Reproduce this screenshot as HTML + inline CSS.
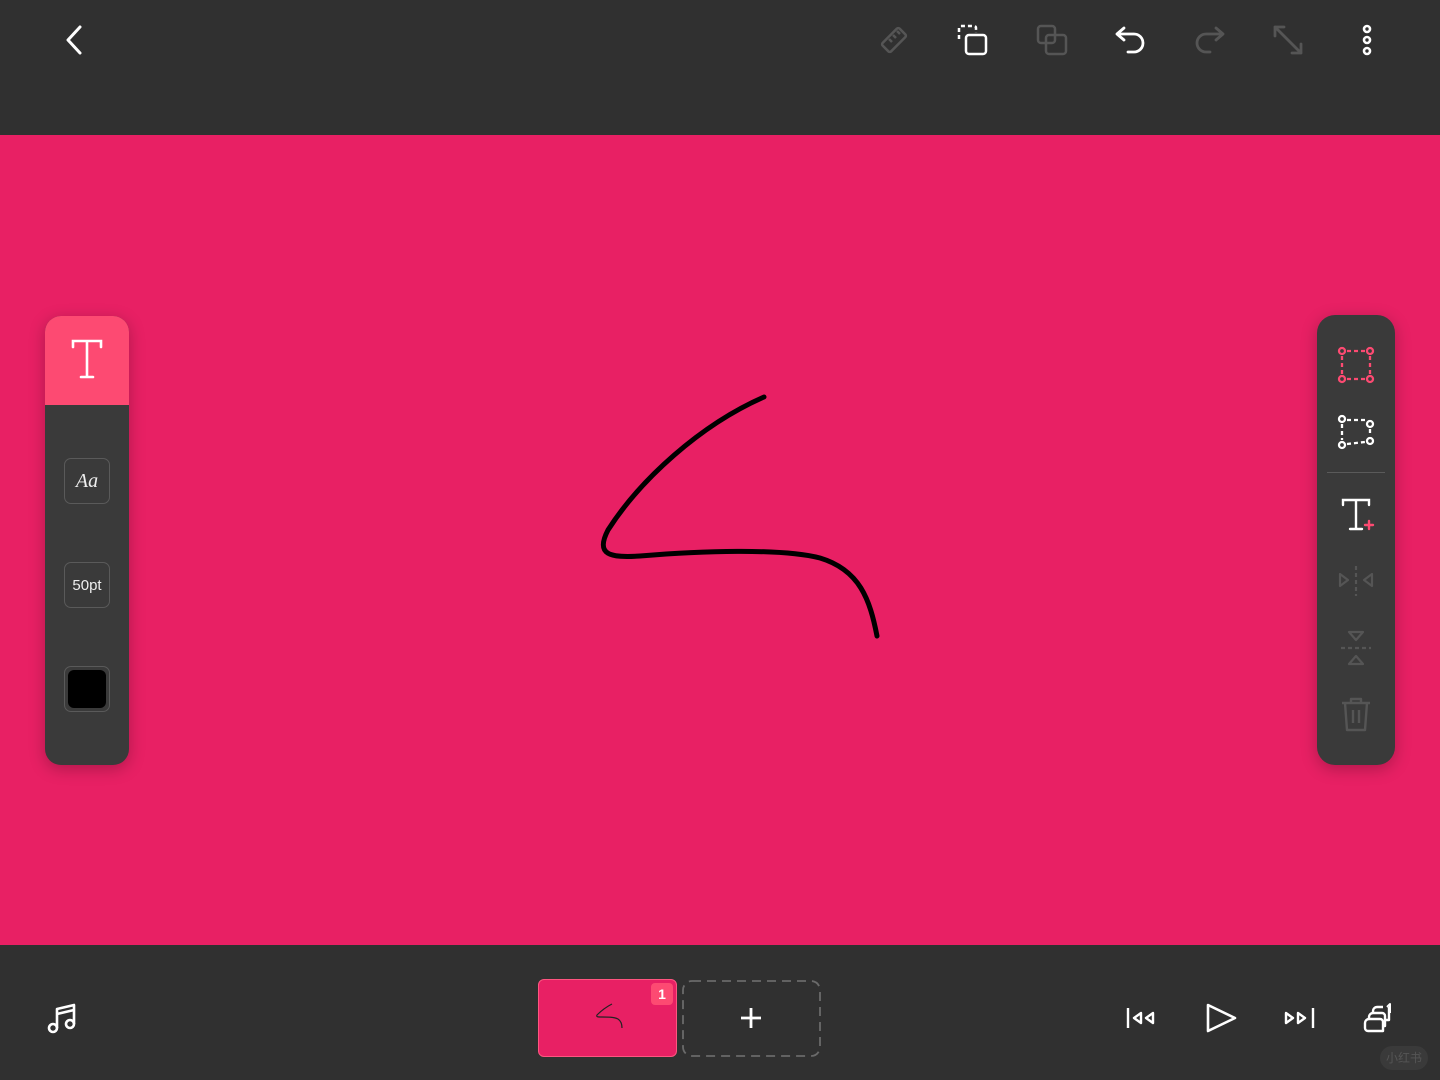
<!DOCTYPE html>
<html><head><meta charset="utf-8"><style>
*{margin:0;padding:0;box-sizing:border-box}
body{width:1440px;height:1080px;background:#303030;position:relative;overflow:hidden;font-family:"Liberation Sans",sans-serif}
.top{position:absolute;left:0;top:0;width:1440px;height:135px;background:#303030}
.canvas{position:absolute;left:0;top:135px;width:1440px;height:810px;background:#e82064}
.bottom{position:absolute;left:0;top:945px;width:1440px;height:135px;background:#303030}
svg{position:absolute;overflow:visible}
.lp{position:absolute;left:45px;top:316px;width:84px;height:449px;background:#3a3a3a;border-radius:16px;overflow:hidden;box-shadow:0 4px 16px rgba(0,0,0,.25)}
.lp .hd{height:89px;background:#fd4a72}
.btn{position:absolute;left:19px;width:46px;height:46px;border:1px solid #5a5a5a;border-radius:7px;color:#eee;display:flex;align-items:center;justify-content:center}
.rp{position:absolute;left:1317px;top:315px;width:78px;height:450px;background:#3a3a3a;border-radius:18px;box-shadow:0 4px 16px rgba(0,0,0,.25)}
</style></head><body>
<div class="top"></div>
<div class="canvas"></div>
<div class="bottom"></div>

<svg style="left:60px;top:24px" width="30" height="32"><path d="M20 3 L8 16 L20 29" fill="none" stroke="#fff" stroke-width="3" stroke-linecap="round" stroke-linejoin="round"/></svg>
<svg style="left:878px;top:24px" width="32" height="32" fill="none" stroke="#555" stroke-width="2.5" stroke-linejoin="round"><rect x="4" y="10" width="24" height="12" rx="2" transform="rotate(-45 16 16)"/><path d="M11 13 l3 3 M15 9 l3 3 M19 5 l3 3" transform="translate(0 2)"/></svg>
<svg style="left:956px;top:23px" width="34" height="34" fill="none" stroke="#fff" stroke-width="2.5"><path d="M3 16 V5 a2 2 0 0 1 2-2 H18 a2 2 0 0 1 2 2 V10" stroke-dasharray="4 3"/><rect x="10" y="12" width="20" height="19" rx="3"/></svg>
<svg style="left:1035px;top:23px" width="34" height="34" fill="none" stroke="#555" stroke-width="2.5"><rect x="3" y="3" width="17" height="17" rx="3"/><rect x="11" y="12" width="20" height="19" rx="3"/></svg>
<svg style="left:1114px;top:24px" width="34" height="32" fill="none" stroke="#fff" stroke-width="2.8" stroke-linecap="round" stroke-linejoin="round"><path d="M10 4 L3 10 L10 16 M3 10 H20 a9 9 0 0 1 0 18 H14"/></svg>
<svg style="left:1192px;top:24px" width="34" height="32" fill="none" stroke="#555" stroke-width="2.8" stroke-linecap="round" stroke-linejoin="round"><path d="M24 4 L31 10 L24 16 M31 10 H14 a9 9 0 0 0 0 18 H18"/></svg>
<svg style="left:1271px;top:23px" width="34" height="34" fill="none" stroke="#555" stroke-width="2.8" stroke-linecap="round" stroke-linejoin="round"><path d="M4 4 L30 30 M4 4 H13 M4 4 V13 M30 30 H21 M30 30 V21"/></svg>
<svg style="left:1358px;top:24px" width="18" height="32" fill="none" stroke="#fff" stroke-width="2.6"><circle cx="9" cy="5" r="3"/><circle cx="9" cy="16" r="3"/><circle cx="9" cy="27" r="3"/></svg>

<svg style="left:0;top:0" width="1440" height="1080"><path d="M764 397 C700 425 640 480 608 530 C595 555 610 558 640 556 C700 551 780 548 820 558 C860 570 870 600 877 636" fill="none" stroke="#000" stroke-width="5" stroke-linecap="round" stroke-linejoin="round"/></svg>

<div class="lp"><div class="hd"></div>
<div class="btn" style="top:142px;font-family:'Liberation Serif',serif;font-style:italic;font-size:20px">Aa</div>
<div class="btn" style="top:246px;font-size:15px">50pt</div>
<div class="btn" style="top:350px"><div style="width:38px;height:38px;background:#000;border-radius:6px"></div></div>
</div>
<svg style="left:70px;top:338px" width="34" height="42" fill="none" stroke="#fff" stroke-width="2.6" stroke-linecap="round"><path d="M3 9 V3 H31 V9 M17 3 V39 M11 39 H23"/></svg>

<div class="rp"></div>
<svg style="left:1338px;top:347px" width="36" height="36" fill="none" stroke="#fd4a72" stroke-width="2.3"><circle cx="4" cy="4" r="3"/><circle cx="32" cy="4" r="3"/><circle cx="4" cy="32" r="3"/><circle cx="32" cy="32" r="3"/><path d="M9 4 H27 M9 32 H27 M4 9 V27 M32 9 V27" stroke-dasharray="4 3"/></svg>
<svg style="left:1338px;top:415px" width="36" height="36" fill="none" stroke="#fff" stroke-width="2.3"><circle cx="4" cy="4" r="3"/><circle cx="32" cy="9" r="3"/><circle cx="4" cy="30" r="3"/><circle cx="32" cy="26" r="3"/><path d="M9 5 H27 M9 29 L27 27 M4 9 V25 M32 14 V21" stroke-dasharray="4 3"/></svg>
<div style="position:absolute;left:1327px;top:472px;width:58px;height:1px;background:#5a5a5a"></div>
<svg style="left:1340px;top:497px" width="36" height="36" fill="none" stroke="#fff" stroke-width="2.4" stroke-linecap="round"><path d="M3 8 V3 H29 V8 M16 3 V32 M10 32 H22"/><path d="M29 24 V32 M25 28 H33" stroke="#fd4a72" stroke-width="2.4"/></svg>
<svg style="left:1338px;top:565px" width="36" height="32" fill="none" stroke="#555" stroke-width="2.2" stroke-linejoin="round"><path d="M2 9 L10 15 L2 21 Z M34 9 L26 15 L34 21 Z"/><path d="M18 1 V31" stroke-dasharray="4 3"/></svg>
<svg style="left:1340px;top:630px" width="32" height="36" fill="none" stroke="#555" stroke-width="2.2" stroke-linejoin="round"><path d="M9 2 L23 2 L16 10 Z M9 34 L23 34 L16 26 Z"/><path d="M1 18 H31" stroke-dasharray="4 3"/></svg>
<svg style="left:1340px;top:697px" width="32" height="36" fill="none" stroke="#555" stroke-width="2.4" stroke-linejoin="round"><path d="M2 6 H30 M11 6 V2 H21 V6 M5 6 L7 33 H25 L27 6 M13 13 V26 M19 13 V26"/></svg>

<svg style="left:46px;top:1002px" width="32" height="32" fill="none" stroke="#fff" stroke-width="2.6" stroke-linejoin="round"><path d="M11 26 V7 L28 3 V22"/><path d="M11 12 L28 8"/><circle cx="7" cy="26" r="4"/><circle cx="24" cy="22" r="4"/></svg>

<div style="position:absolute;left:538px;top:979px;width:139px;height:78px;background:#e82064;border:1px solid #ff5580;border-radius:6px"></div>
<svg style="left:594px;top:1002px" width="32" height="28"><path d="M18 2 C12 5 7 9 3 13 C2 15 4 15 8 15 C14 15 20 15 24 17 C27 19 28 22 28 26" fill="none" stroke="#222" stroke-width="1.2"/></svg>
<div style="position:absolute;left:651px;top:983px;width:22px;height:22px;background:#fd4a72;border-radius:4px;color:#fff;font-size:14px;font-weight:bold;text-align:center;line-height:22px">1</div>
<svg style="left:682px;top:980px" width="139" height="77"><rect x="1" y="1" width="137" height="75" rx="9" fill="none" stroke="#6a6a6a" stroke-width="1.8" stroke-dasharray="9 6"/></svg>
<svg style="left:740px;top:1007px" width="22" height="22" stroke="#fff" stroke-width="2.8"><path d="M11 1 V21 M1 11 H21"/></svg>

<svg style="left:1126px;top:1006px" width="32" height="24" fill="none" stroke="#fff" stroke-width="2.4" stroke-linejoin="round"><path d="M2 2 V22"/><path d="M15 7 L8 12 L15 17 Z M27 7 L20 12 L27 17 Z"/></svg>
<svg style="left:1205px;top:1002px" width="32" height="32" fill="none" stroke="#fff" stroke-width="2.6" stroke-linejoin="round"><path d="M3 3 L30 16 L3 29 Z"/></svg>
<svg style="left:1283px;top:1006px" width="32" height="24" fill="none" stroke="#fff" stroke-width="2.4" stroke-linejoin="round"><path d="M30 2 V22"/><path d="M3 7 L10 12 L3 17 Z M15 7 L22 12 L15 17 Z"/></svg>
<svg style="left:1362px;top:1003px" width="34" height="32" fill="none" stroke="#fff" stroke-width="2.4" stroke-linejoin="round"><path d="M7 16 H18 a3 3 0 0 1 3 3 V28 H6 a3 3 0 0 1 -3 -3 V20 a4 4 0 0 1 4-4 Z"/><path d="M7 16 V14 a4 4 0 0 1 4-4 H20 a3 3 0 0 1 3 3 V23 H21"/><path d="M11 10 V8 a4 4 0 0 1 4-4 H21 M27 4 V17 H23"/><path d="M25 4 L28 1 V10" stroke-width="2"/></svg>
<div style="position:absolute;left:1380px;top:1046px;width:48px;height:24px;background:#3a3a3a;border-radius:12px;color:#555;font-size:12px;text-align:center;line-height:24px;font-family:'Liberation Sans','Noto Sans CJK SC',sans-serif">小红书</div>
</body></html>
